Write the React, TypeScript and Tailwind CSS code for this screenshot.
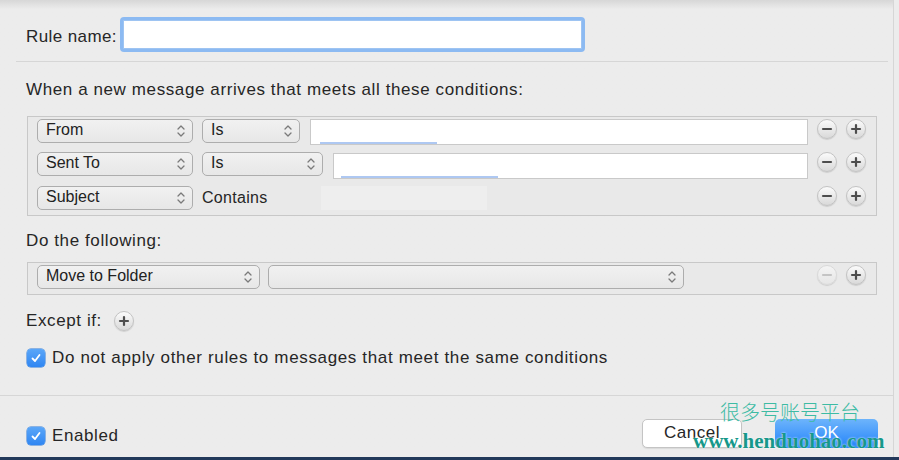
import React from 'react';

function Chevrons() {
  return (
    <svg width="10" height="16" viewBox="0 0 10 16" className="shrink-0">
      <path d="M2 6 L5 3 L8 6" fill="none" stroke="#7a7a7a" strokeWidth="1.3" strokeLinecap="round" strokeLinejoin="round" />
      <path d="M2 10 L5 13 L8 10" fill="none" stroke="#7a7a7a" strokeWidth="1.3" strokeLinecap="round" strokeLinejoin="round" />
    </svg>
  );
}

function Popup({ label, className }: { label?: string; className: string }) {
  return (
    <div className={`h-[24px] shrink-0 flex items-center justify-between pl-[8px] pr-[6px] rounded-[5px] border border-[#adadad] bg-gradient-to-b from-[#f1f1f1] to-[#e7e7e7] text-[16px] text-[#222] ${className}`}>
      <span className="leading-none -mt-[2px]">{label}</span>
      <Chevrons />
    </div>
  );
}

function RoundBtn({ kind, disabled }: { kind: 'minus' | 'plus'; disabled?: boolean }) {
  const c = disabled ? '#c4c4c4' : '#4d4d4d';
  return (
    <div className={`w-[20px] h-[20px] shrink-0 rounded-full border flex items-center justify-center bg-gradient-to-b shadow-[0_1px_1px_rgba(0,0,0,0.12)] ${disabled ? 'border-[#d9d9d9] from-[#f4f4f4] to-[#e6e6e6]' : 'border-[#c3c3c3] from-[#fbfbfb] to-[#d9d9d9]'}`}>
      <svg width="12" height="12" viewBox="0 0 12 12">
        <path d="M2 6 H10" stroke={c} strokeWidth="2.2" strokeLinecap="round" />
        {kind === 'plus' && <path d="M6 2 V10" stroke={c} strokeWidth="2.2" strokeLinecap="round" />}
      </svg>
    </div>
  );
}

function Checkbox() {
  return (
    <div className="w-[18px] h-[18px] shrink-0 rounded-[4px] bg-gradient-to-b from-[#5aa6f8] to-[#2f86f2] flex items-center justify-center shadow-[0_0_0_0.5px_#2a78d8]">
      <svg width="12" height="12" viewBox="0 0 12 12">
        <path d="M2.5 6.5 L5 9 L9.5 3" fill="none" stroke="white" strokeWidth="1.8" strokeLinecap="round" strokeLinejoin="round" />
      </svg>
    </div>
  );
}

function Field({ className, line }: { className: string; line: string }) {
  return (
    <div className={`relative h-[26px] bg-white border border-[#c9c9c9] ${className}`}>
      <div className={`absolute bottom-0 h-[2px] bg-[#aec8f2] ${line}`} />
    </div>
  );
}

export default function App() {
  return (
    <div className="w-[899px] h-[460px] bg-[#ececec] overflow-hidden relative font-['Liberation_Sans',Arial,sans-serif] text-[#262626] flex flex-col">
      <div className="flex-1 flex">
        <div className="w-[894px] border-r border-[#d6d6d6] flex flex-col bg-gradient-to-b from-[#d7d7d7] from-0% via-[#ececec] via-[2%] to-[#ececec]">
          {/* Rule name */}
          <div className="flex items-center h-[36px] mt-[16px] pl-[26px]">
            <span className="text-[17px] tracking-[0.4px] w-[94px] mt-[6px]">Rule name:</span>
            <div className="w-[465px] h-[35px] rounded-[4px] bg-[#8cbaf2] p-[3px]">
              <div className="w-full h-full bg-white border border-[#9ec4f2]" />
            </div>
          </div>
          <div className="h-px bg-[#d6d6d6] mx-[16px] mt-[9px] mr-[5px]" />

          <div className="pl-[26px] mt-[16px] h-[24px] text-[17px] tracking-[0.6px] leading-[24px]">When a new message arrives that meets all these conditions:</div>

          {/* Conditions */}
          <div className="ml-[27px] mr-[16px] mt-[14px] border border-[#c8c8c8] bg-[#e9e9e9] pt-[2px] pb-[5px] pl-[9px] pr-[10px] flex flex-col">
            <div className="flex items-start h-[26px]">
              <Popup label="From" className="w-[156px]" />
              <Popup label="Is" className="w-[98px] ml-[9px]" />
              <Field className="flex-1 ml-[10px]" line="left-[9px] w-[117px]" />
              <div className="ml-[9px]"><RoundBtn kind="minus" /></div>
              <div className="ml-[9px]"><RoundBtn kind="plus" /></div>
            </div>
            <div className="flex items-start h-[27px] mt-[7px]">
              <Popup label="Sent To" className="w-[156px]" />
              <Popup label="Is" className="w-[121px] ml-[9px]" />
              <Field className="flex-1 ml-[10px] mt-[1px]" line="left-[7px] w-[157px]" />
              <div className="ml-[9px]"><RoundBtn kind="minus" /></div>
              <div className="ml-[9px]"><RoundBtn kind="plus" /></div>
            </div>
            <div className="flex items-start h-[24px] mt-[7px]">
              <Popup label="Subject" className="w-[156px]" />
              <span className="ml-[9px] text-[16px] tracking-[0.3px] leading-[24px]">Contains</span>
              <div className="ml-[53px] w-[166px] h-[24px] bg-[#eeeeee]" />
              <div className="flex-1" />
              <div className="ml-[9px]"><RoundBtn kind="minus" /></div>
              <div className="ml-[9px]"><RoundBtn kind="plus" /></div>
            </div>
          </div>

          <div className="pl-[26px] mt-[13px] h-[24px] text-[17px] tracking-[0.6px] leading-[24px]">Do the following:</div>

          {/* Actions */}
          <div className="ml-[27px] mr-[16px] mt-[9px] border border-[#c8c8c8] bg-[#e9e9e9] pt-[2px] pb-[5px] pl-[9px] pr-[10px] flex items-start">
            <Popup label="Move to Folder" className="w-[223px]" />
            <Popup className="w-[416px] ml-[8px]" />
            <div className="flex-1" />
            <RoundBtn kind="minus" disabled />
            <div className="ml-[9px]"><RoundBtn kind="plus" /></div>
          </div>

          <div className="flex items-center pl-[26px] mt-[14px] h-[24px]">
            <span className="text-[17px] tracking-[0.6px]">Except if:</span>
            <div className="ml-[12px]"><RoundBtn kind="plus" /></div>
          </div>

          <div className="flex items-center pl-[27px] mt-[13px] h-[24px]">
            <Checkbox />
            <span className="ml-[7px] text-[17px] tracking-[0.65px]">Do not apply other rules to messages that meet the same conditions</span>
          </div>

          <div className="h-px bg-[#d6d6d6] mt-[25px]" />

          <div className="flex items-center pl-[27px] pr-[15px] mt-[22px] h-[30px]">
            <div className="flex items-center mt-[6px]">
              <Checkbox />
              <span className="ml-[7px] text-[17px] tracking-[0.6px]">Enabled</span>
            </div>
            <div className="flex-1" />
            <div className="w-[100px] h-[29px] rounded-[5px] bg-white border border-[#c4c4c4] shadow-[0_1px_1px_rgba(0,0,0,0.08)] flex items-center justify-center text-[17px] tracking-[0.5px]">Cancel</div>
            <div className="ml-[33px] w-[103px] h-[29px] rounded-[5px] bg-gradient-to-b from-[#6db4fb] to-[#1c82fa] flex items-center justify-center text-[17px] text-white">OK</div>
          </div>
        </div>
        <div className="flex-1" />
      </div>
      <div className="h-[3px] bg-[#22395a]" />

      {/* watermark */}
      <div className="absolute left-[720px] top-[402px] text-[20px] leading-none text-[#3dbba4] font-['Noto_Sans_CJK_SC',sans-serif] font-light">很多号账号平台</div>
      <div className="absolute left-[693px] top-[431px] text-[21px] leading-none font-bold text-[#16988a] font-['Liberation_Serif',serif] [text-shadow:0_0_2px_#fff]">www.henduohao.com</div>
    </div>
  );
}
